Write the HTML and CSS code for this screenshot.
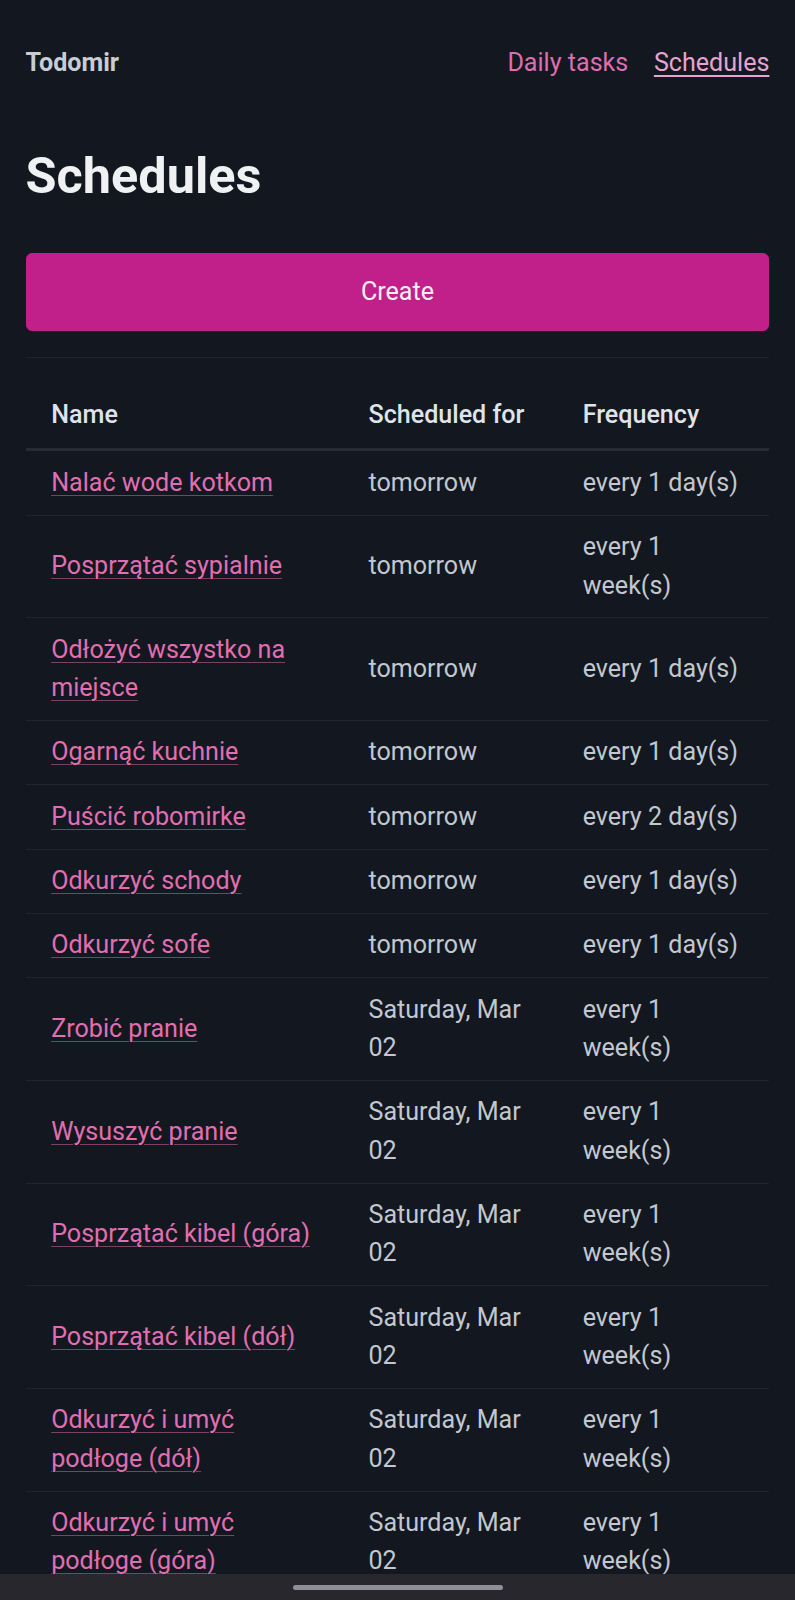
FILE: index.html
```html
<!DOCTYPE html>
<html lang="pl">
<head>
<meta charset="utf-8">
<title>Schedules - Todomir</title>
<link rel="stylesheet" href="styles.css">
</head>
<body>
<main class="container">
  <nav class="topnav">
    <strong class="brand">Todomir</strong>
    <ul class="menu">
      <li><a href="#">Daily tasks</a></li>
      <li><a href="#" class="current">Schedules</a></li>
    </ul>
  </nav>
  <h1 class="title">Schedules</h1>
  <button class="create" type="button">Create</button>
  <hr class="sep">
  <table class="schedules">
    <colgroup>
      <col class="c-name">
      <col class="c-date">
      <col class="c-freq">
    </colgroup>
    <thead>
      <tr><th>Name</th><th>Scheduled for</th><th>Frequency</th></tr>
    </thead>
    <tbody>
      <tr><td><a href="#">Nalać wode kotkom</a></td><td>tomorrow</td><td>every 1 day(s)</td></tr>
      <tr><td><a href="#">Posprzątać sypialnie</a></td><td>tomorrow</td><td>every 1 week(s)</td></tr>
      <tr><td><a href="#">Odłożyć wszystko na miejsce</a></td><td>tomorrow</td><td>every 1 day(s)</td></tr>
      <tr><td><a href="#">Ogarnąć kuchnie</a></td><td>tomorrow</td><td>every 1 day(s)</td></tr>
      <tr><td><a href="#">Puścić robomirke</a></td><td>tomorrow</td><td>every 2 day(s)</td></tr>
      <tr><td><a href="#">Odkurzyć schody</a></td><td>tomorrow</td><td>every 1 day(s)</td></tr>
      <tr><td><a href="#">Odkurzyć sofe</a></td><td>tomorrow</td><td>every 1 day(s)</td></tr>
      <tr><td><a href="#">Zrobić pranie</a></td><td>Saturday, Mar 02</td><td>every 1 week(s)</td></tr>
      <tr><td><a href="#">Wysuszyć pranie</a></td><td>Saturday, Mar 02</td><td>every 1 week(s)</td></tr>
      <tr><td><a href="#">Posprzątać kibel (góra)</a></td><td>Saturday, Mar 02</td><td>every 1 week(s)</td></tr>
      <tr><td><a href="#">Posprzątać kibel (dół)</a></td><td>Saturday, Mar 02</td><td>every 1 week(s)</td></tr>
      <tr><td><a href="#">Odkurzyć i umyć podłoge (dół)</a></td><td>Saturday, Mar 02</td><td>every 1 week(s)</td></tr>
      <tr><td><a href="#">Odkurzyć i umyć podłoge (góra)</a></td><td>Saturday, Mar 02</td><td>every 1 week(s)</td></tr>
    </tbody>
  </table>
</main>
<div class="sysbar"><span class="handle"></span></div>
</body>
</html>
```
FILE: styles.css
```css
html, body {
  margin: 0;
  padding: 0;
  background: #13171f;
}
body {
  font-family: Roboto, "Noto Sans", sans-serif;
  font-size: 25.1px;
  line-height: 38.4px;
  color: #c2c7d0;
}
.container {
  padding: 44px 25.6px 40px;
}
.topnav {
  display: flex;
  justify-content: space-between;
  align-items: center;
  height: 38.4px;
}
.brand {
  font-weight: 700;
  color: #c8ccd4;
}
.menu {
  display: flex;
  gap: 25.6px;
  list-style: none;
  margin: 0;
  padding: 0;
}
.menu a {
  color: #dc6eb1;
  text-decoration: none;
}
.menu a.current {
  color: #e6a3d2;
  text-decoration: underline;
  text-decoration-thickness: 2px;
  text-underline-offset: 4px;
}
.title {
  margin: 65px 0 0;
  font-size: 50.4px;
  line-height: 57.6px;
  font-weight: 700;
  color: #f0f1f3;
}
.create {
  display: block;
  width: 100%;
  margin-top: 48px;
  height: 78px;
  border: 1px solid #c1208b;
  border-radius: 6px;
  background: #c1208b;
  color: #f6f0f4;
  font: inherit;
  padding: 0;
  cursor: pointer;
}
.sep {
  margin: 26px 0 0;
  border: 0;
  height: 1px;
  background: #1f242d;
}
.schedules {
  margin-top: 25px;
  width: 100%;
  border-collapse: collapse;
  table-layout: fixed;
}
.c-name { width: 317.3px; }
.c-date { width: 214.2px; }
.c-freq { width: auto; }
.schedules th,
.schedules td {
  text-align: left;
  vertical-align: middle;
  padding: 12.45px 25.6px;
  border-bottom: 1px solid #1f242d;
}
.schedules th {
  font-weight: 500;
  color: #dfe3eb;
  padding-top: 13px;
  padding-bottom: 14px;
  border-bottom: 3px solid #262b34;
}
.schedules td a {
  color: #e06fb2;
  text-decoration: underline;
  text-decoration-color: rgba(224, 111, 178, 0.5);
  text-decoration-thickness: 1px;
  text-underline-offset: 4px;
}
.sysbar {
  position: fixed;
  left: 0;
  right: 0;
  bottom: 0;
  height: 26px;
  background: #28272e;
  display: flex;
  justify-content: center;
  align-items: center;
}
.handle {
  display: block;
  width: 210px;
  height: 5px;
  border-radius: 3px;
  background: #8f8d98;
}
```
